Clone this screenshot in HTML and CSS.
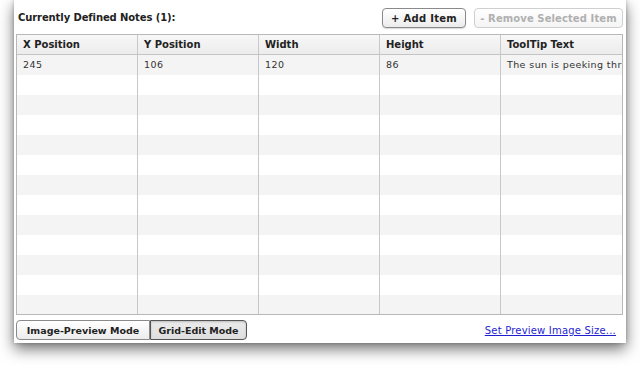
FILE: index.html
```html
<!DOCTYPE html>
<html>
<head>
<meta charset="utf-8">
<link rel="stylesheet" href="styles.css">
</head>
<body>
<div class="window">
  <div class="topbar">
    <div class="title">Currently Defined Notes (1):</div>
    <div class="actions">
      <button class="btn">+ Add Item</button>
      <button class="btn disabled">- Remove Selected Item</button>
    </div>
  </div>
  <div class="grid">
    <div class="row head">
      <div class="cell">X Position</div>
      <div class="cell">Y Position</div>
      <div class="cell">Width</div>
      <div class="cell">Height</div>
      <div class="cell">ToolTip Text</div>
    </div>
    <div class="row alt">
      <div class="cell">245</div>
      <div class="cell">106</div>
      <div class="cell">120</div>
      <div class="cell">86</div>
      <div class="cell">The sun is peeking thr</div>
    </div>
    <div class="row"><div class="cell"></div><div class="cell"></div><div class="cell"></div><div class="cell"></div><div class="cell"></div></div>
    <div class="row alt"><div class="cell"></div><div class="cell"></div><div class="cell"></div><div class="cell"></div><div class="cell"></div></div>
    <div class="row"><div class="cell"></div><div class="cell"></div><div class="cell"></div><div class="cell"></div><div class="cell"></div></div>
    <div class="row alt"><div class="cell"></div><div class="cell"></div><div class="cell"></div><div class="cell"></div><div class="cell"></div></div>
    <div class="row"><div class="cell"></div><div class="cell"></div><div class="cell"></div><div class="cell"></div><div class="cell"></div></div>
    <div class="row alt"><div class="cell"></div><div class="cell"></div><div class="cell"></div><div class="cell"></div><div class="cell"></div></div>
    <div class="row"><div class="cell"></div><div class="cell"></div><div class="cell"></div><div class="cell"></div><div class="cell"></div></div>
    <div class="row alt"><div class="cell"></div><div class="cell"></div><div class="cell"></div><div class="cell"></div><div class="cell"></div></div>
    <div class="row"><div class="cell"></div><div class="cell"></div><div class="cell"></div><div class="cell"></div><div class="cell"></div></div>
    <div class="row alt"><div class="cell"></div><div class="cell"></div><div class="cell"></div><div class="cell"></div><div class="cell"></div></div>
    <div class="row"><div class="cell"></div><div class="cell"></div><div class="cell"></div><div class="cell"></div><div class="cell"></div></div>
    <div class="row alt"><div class="cell"></div><div class="cell"></div><div class="cell"></div><div class="cell"></div><div class="cell"></div></div>
  </div>
  <div class="bottombar">
    <div class="tabs">
      <button class="tab">Image-Preview Mode</button>
      <button class="tab active">Grid-Edit Mode</button>
    </div>
    <a class="link" href="#">Set Preview Image Size...</a>
  </div>
</div>
</body>
</html>
```
FILE: styles.css
```css
html, body {
  margin: 0;
  padding: 0;
  background: #ffffff;
  width: 640px;
  height: 365px;
  overflow: hidden;
}
body {
  font-family: "DejaVu Sans", Verdana, sans-serif;
  color: #222;
}
.window {
  margin-left: 14px;
  width: 612px;
  height: 343px;
  background: #fff;
  box-shadow: 0 6px 14px rgba(0,0,0,0.55), 0 0 4px rgba(0,0,0,0.25);
  display: flex;
  flex-direction: column;
  padding: 0 3px 0 2px;
  box-sizing: border-box;
}
.topbar {
  height: 34px;
  display: flex;
  align-items: center;
  justify-content: space-between;
}
.title {
  font-size: 10px;
  font-weight: bold;
  padding-left: 2px;
  padding-top: 1px;
  letter-spacing: -0.1px;
}
.actions {
  display: flex;
  gap: 8px;
  padding-top: 2px;
}
.btn {
  font-family: "DejaVu Sans", Verdana, sans-serif;
  font-size: 10px;
  font-weight: bold;
  height: 20px;
  border: 1px solid #8a8a8a;
  border-radius: 4px;
  background: linear-gradient(#ffffff, #ececec);
  color: #222;
  padding: 0;
  white-space: nowrap;
  letter-spacing: 0.3px;
  box-shadow: 0 1px 1px rgba(0,0,0,0.15);
  width: 84px;
}
.btn.disabled {
  width: 149px;
  color: #b0b0b0;
  border-color: #cfcfcf;
  box-shadow: none;
  background: linear-gradient(#ffffff, #f4f4f4);
  letter-spacing: 0.1px;
}
.grid {
  border: 1px solid #b8b8b8;
  height: 281px;
  box-sizing: border-box;
  overflow: hidden;
}
.row {
  display: grid;
  grid-template-columns: 121px 121px 121px 121px 121px;
  height: 20px;
  background: #fff;
}
.row.alt { background: #f4f4f4; }
.row.head {
  height: 19px;
  background: linear-gradient(#f7f7f7, #ececec);
  border-bottom: 1px solid #c4c4c4;
}
.cell {
  border-right: 1px solid #c8c8c8;
  font-size: 9.5px;
  line-height: 19px;
  padding-left: 6px;
  white-space: nowrap;
  overflow: hidden;
  letter-spacing: 0.4px;
  color: #333;
}
.row.head .cell {
  font-weight: bold;
  font-size: 10px;
  letter-spacing: 0;
  color: #222;
}
.cell:last-child { border-right: none; }
.bottombar {
  flex: 1;
  display: flex;
  align-items: center;
  justify-content: space-between;
  padding-top: 2px;
}
.tabs { display: flex; }
.tab {
  font-family: "DejaVu Sans", Verdana, sans-serif;
  font-size: 9.5px;
  font-weight: bold;
  height: 20px;
  border: 1px solid #8a8a8a;
  background: linear-gradient(#ffffff, #ececec);
  color: #222;
  padding: 0;
  white-space: nowrap;
  letter-spacing: 0;
  width: 134px;
  border-radius: 4px 0 0 4px;
}
.tab.active {
  width: 97px;
  border-radius: 0 4px 4px 0;
  background: linear-gradient(#ebebeb, #dedede);
  border-color: #555;
  box-shadow: inset 0 1px 2px rgba(0,0,0,0.2);
}
.link {
  font-size: 10px;
  color: #1f1fd0;
  text-decoration: underline;
  padding-right: 7px;
  letter-spacing: 0.2px;
}
```
